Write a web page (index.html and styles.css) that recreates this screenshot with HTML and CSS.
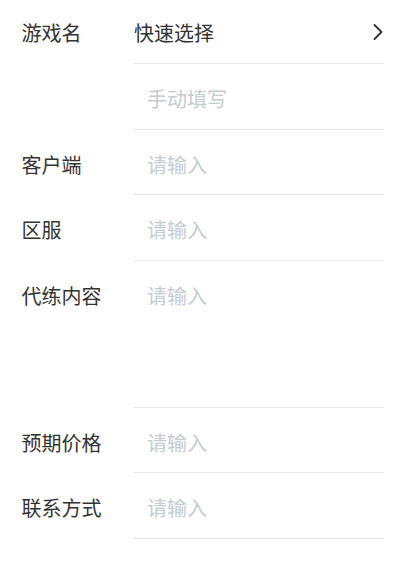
FILE: index.html
```html
<!DOCTYPE html>
<html lang="zh-CN">
<head>
<meta charset="utf-8">
<link rel="stylesheet" href="styles.css">
</head>
<body>
<div class="form">
  <div class="row first">
    <div class="label">游戏名</div>
    <div class="field select">
      <span class="value">快速选择</span>
      <svg class="chev" width="10" height="18" viewBox="0 0 10 18"><path d="M1.5 2 L8.5 9 L1.5 16" fill="none" stroke="#333" stroke-width="1.9" stroke-linecap="round" stroke-linejoin="round"/></svg>
    </div>
  </div>
  <div class="row">
    <div class="label"></div>
    <div class="field"><span class="ph">手动填写</span></div>
  </div>
  <div class="row">
    <div class="label">客户端</div>
    <div class="field"><span class="ph">请输入</span></div>
  </div>
  <div class="row">
    <div class="label">区服</div>
    <div class="field"><span class="ph">请输入</span></div>
  </div>
  <div class="row tall">
    <div class="label">代练内容</div>
    <div class="field"><span class="ph">请输入</span></div>
  </div>
  <div class="row">
    <div class="label">预期价格</div>
    <div class="field"><span class="ph">请输入</span></div>
  </div>
  <div class="row">
    <div class="label">联系方式</div>
    <div class="field"><span class="ph">请输入</span></div>
  </div>
</div>
</body>
</html>
```

FILE: styles.css
```css
html, body {
  margin: 0;
  padding: 0;
  background: #ffffff;
}
body {
  font-family: "Noto Sans CJK SC", "Noto Sans", sans-serif;
  font-size: 20px;
  color: #333333;
}
.form {
  display: flex;
  flex-direction: column;
}
.row {
  display: grid;
  grid-template-columns: 134px 250px;
  height: 65.6px;
}
.row.first {
  height: 64px;
}
.row.tall {
  height: 147px;
}
.label {
  padding-left: 21.5px;
  padding-top: 22px;
  line-height: 26px;
  color: #333333;
}
.row.first .label,
.row.first .field {
  padding-top: 20px;
}
.field {
  box-sizing: border-box;
  border-bottom: 1px solid #e6e6e6;
  padding-top: 22px;
  line-height: 26px;
}
.field .ph {
  display: block;
  padding-left: 13px;
  color: #c6cad3;
}
.select {
  display: flex;
  justify-content: space-between;
  align-items: flex-start;
}
.chev {
  margin-top: 3px;
  margin-right: 1px;
}
```
